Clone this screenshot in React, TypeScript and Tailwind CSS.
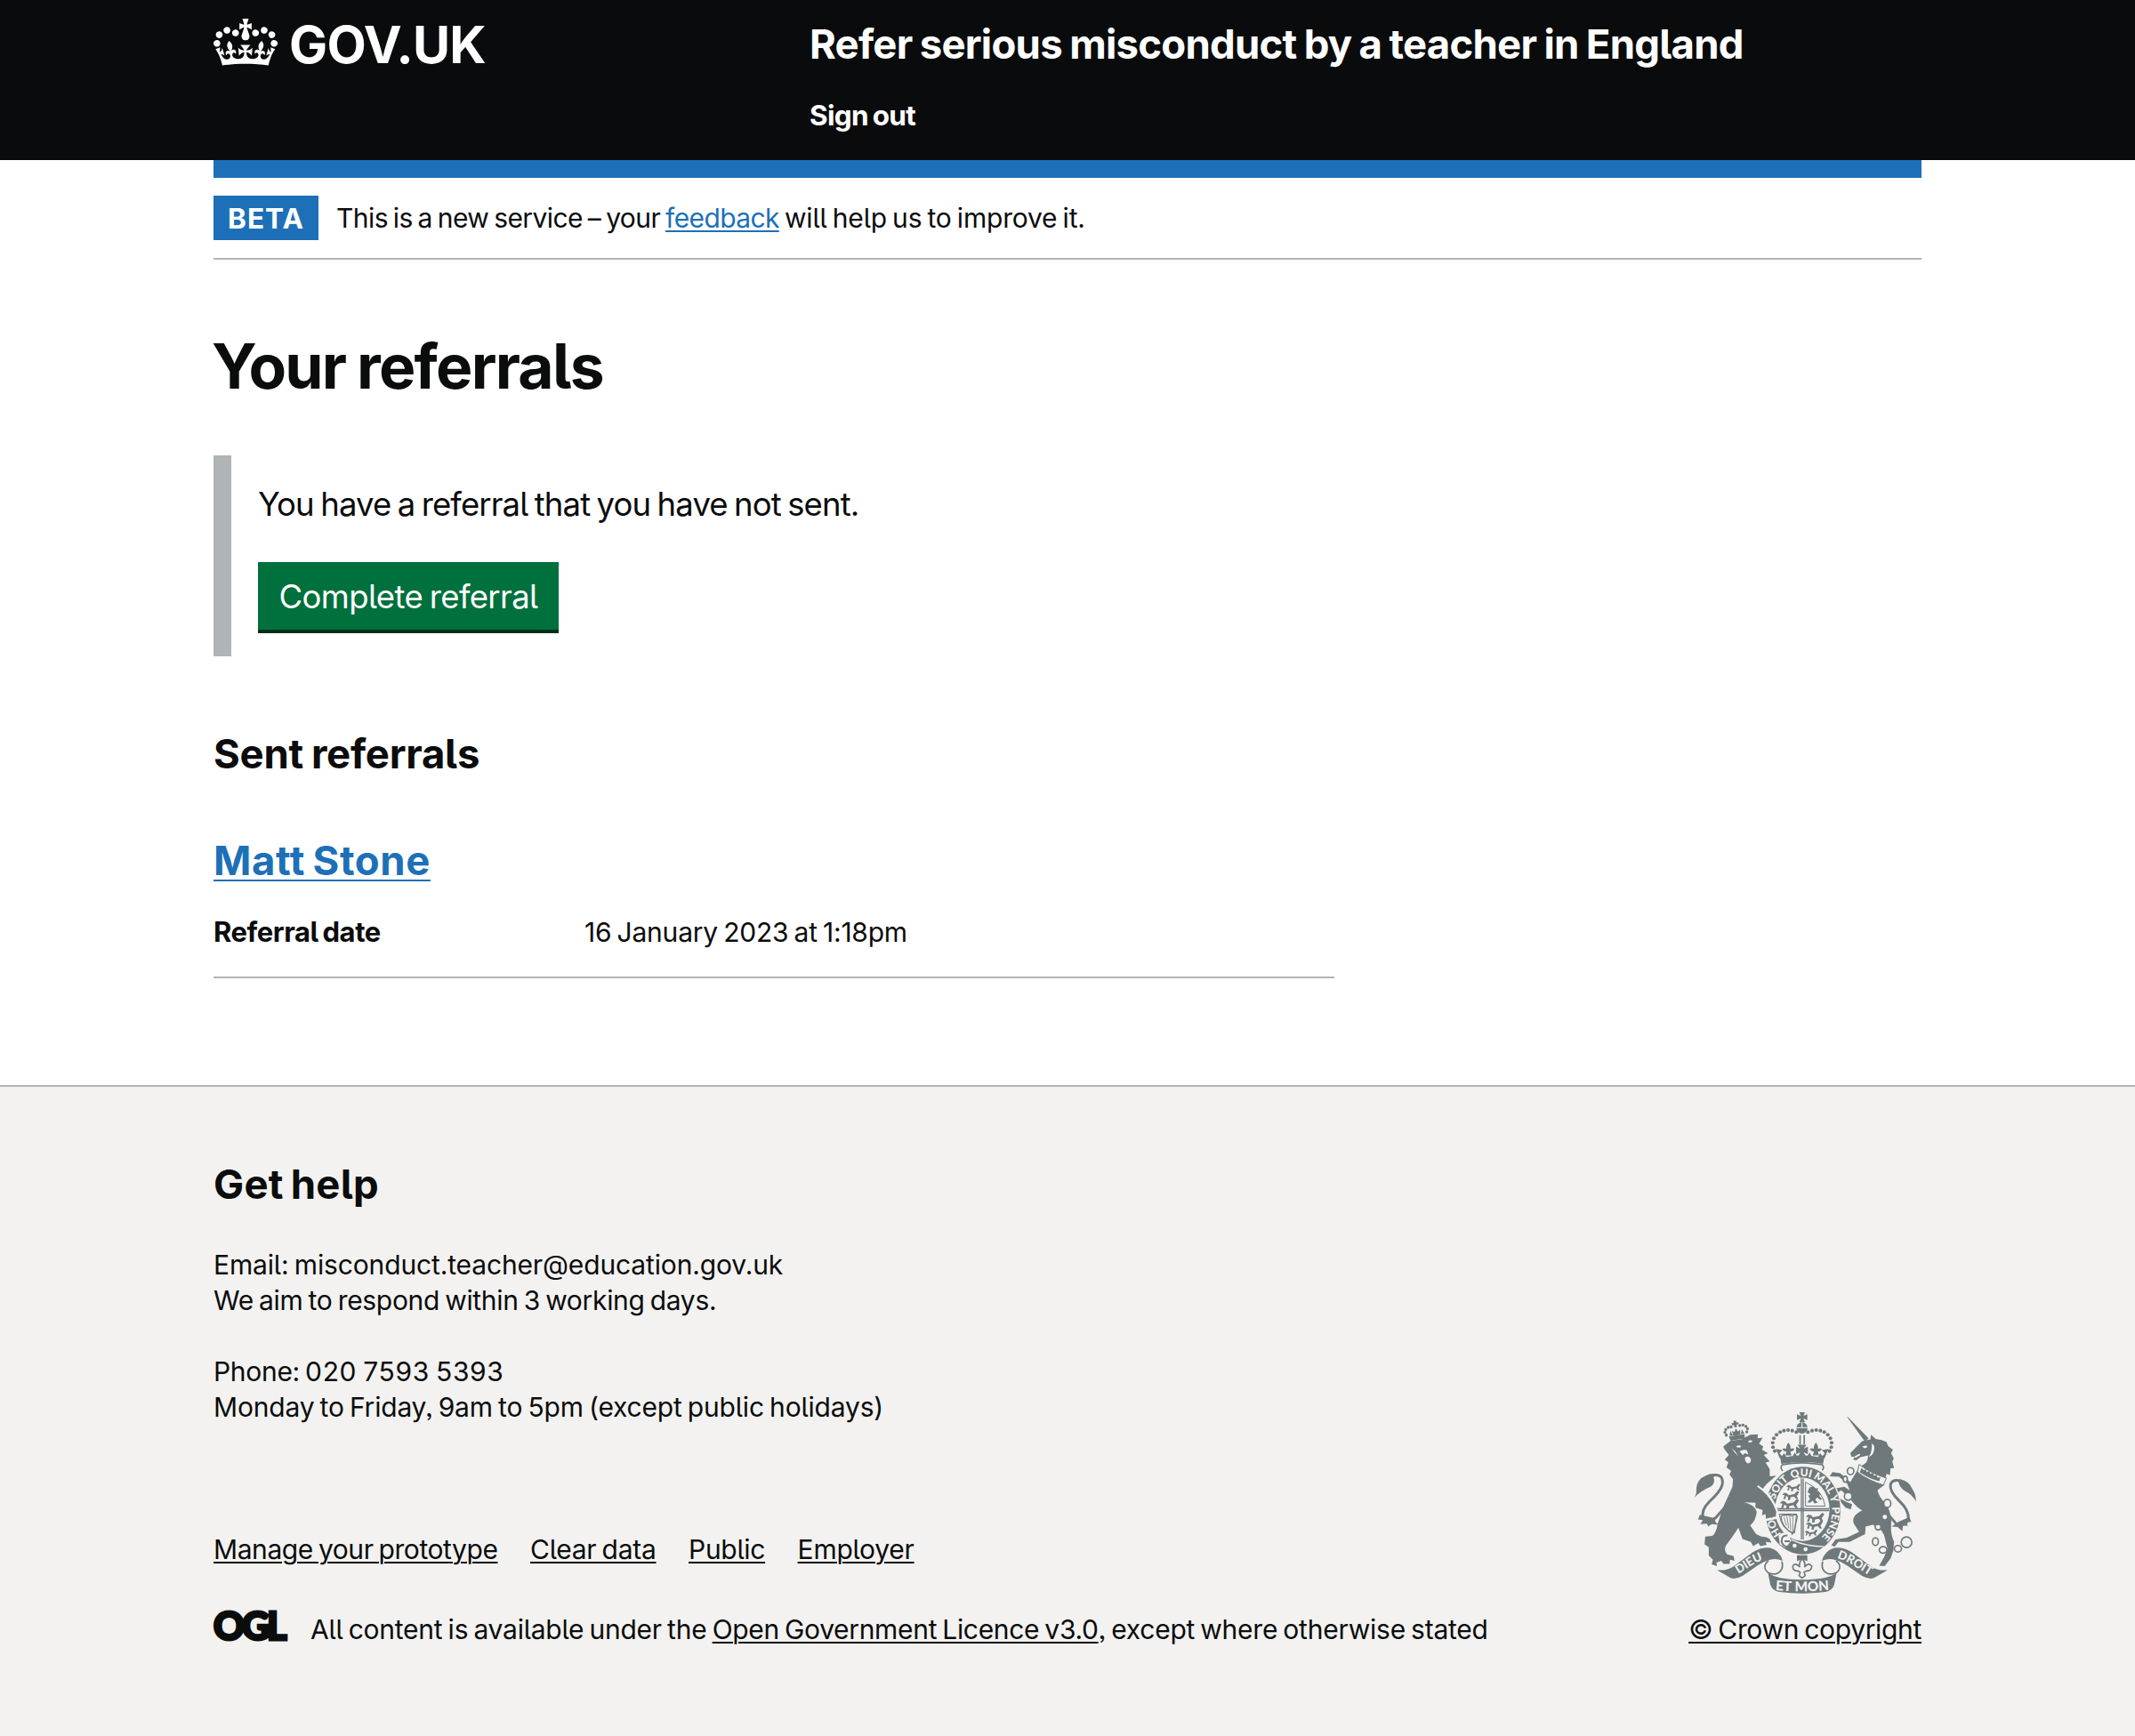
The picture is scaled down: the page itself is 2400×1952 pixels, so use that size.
const CROWN =
  "M25 30.2c3.5 1.5 7.7-.2 9.1-3.7 1.5-3.6-.2-7.8-3.9-9.2-3.6-1.4-7.6.3-9.1 3.9-1.4 3.5.3 7.5 3.9 9zM9 39.5c3.6 1.5 7.8-.2 9.2-3.7 1.5-3.6-.2-7.8-3.9-9.1-3.6-1.5-7.6.2-9.1 3.8-1.4 3.5.3 7.5 3.8 9zM4.4 57.2c3.5 1.5 7.7-.2 9.1-3.8 1.5-3.6-.2-7.7-3.9-9.1-3.5-1.5-7.6.3-9.1 3.8-1.4 3.5.3 7.6 3.9 9.1zm38.3-21.4c3.5 1.5 7.7-.2 9.1-3.8 1.5-3.6-.2-7.7-3.9-9.1-3.6-1.5-7.6.3-9.1 3.8-1.3 3.6.4 7.7 3.9 9.1zm64.4-5.6c-3.6 1.5-7.8-.2-9.1-3.7-1.5-3.6.2-7.8 3.8-9.2 3.6-1.4 7.7.3 9.2 3.9 1.3 3.5-.4 7.5-3.9 9zm15.9 9.3c-3.6 1.5-7.7-.2-9.1-3.7-1.5-3.6.2-7.8 3.7-9.1 3.6-1.5 7.7.2 9.2 3.8 1.5 3.5-.3 7.5-3.8 9zm4.7 17.7c-3.6 1.5-7.8-.2-9.2-3.8-1.5-3.6.2-7.7 3.9-9.1 3.6-1.5 7.7.3 9.2 3.8 1.3 3.5-.4 7.6-3.9 9.1zM89.3 35.8c-3.6 1.5-7.8-.2-9.2-3.8-1.4-3.6.2-7.7 3.9-9.1 3.6-1.5 7.7.3 9.2 3.8 1.4 3.6-.3 7.7-3.9 9.1zM69.7 17.7l8.9 4.7V9.3l-8.9 2.8c-.2-.3-.5-.6-.9-.9L72.4 0H59.6l3.5 11.2c-.3.3-.6.5-.9.9l-8.8-2.8v13.1l8.8-4.7c.3.3.6.7.9.9l-5 15.4v.1c-.2.8-.4 1.6-.4 2.4 0 4.1 3.1 7.5 7 8.1h.2c.3 0 .7.1 1 .1.4 0 .7 0 1-.1h.2c4-.6 7.1-4.1 7.1-8.1 0-.8-.1-1.7-.4-2.4V34l-5.1-15.4c.4-.2.7-.6 1-.9zM66 92.8c16.9 0 32.8 1.1 47.1 3.2 4-16.9 8.9-26.7 14-33.5l-9.6-3.4c1 4.9 1.1 7.2 0 10.2-1.5-1.4-3-4.3-4.2-8.7L108.6 76c2.8-2 5-3.2 7.5-3.3-4.4 9.4-10 11.9-13.6 11.2-4.3-.8-6.3-4.6-5.6-7.9 1-4.7 5.7-5.9 8-.5 4.3-8.7-3-11.4-7.6-8.8 7.1-7.2 7.9-13.5 2.1-21.1-8 6.1-8.1 12.3-4.5 20.8-4.7-5.4-12.1-2.5-9.5 6.2 3.4-5.2 7.9-2 7.2 3.1-.6 4.3-6.4 7.8-13.5 7.2-10.3-.9-10.9-8-11.2-13.8 2.5-.5 7.1 1.8 11 7.3L80.2 60c-4.1 4.4-8 5.3-12.3 5.4 1.4-4.4 8-11.6 8-11.6H55.5s6.4 7.2 7.9 11.6c-4.2-.1-8-1-12.3-5.4l1.4 16.4c3.9-5.5 8.5-7.7 10.9-7.3-.3 5.8-.9 12.8-11.1 13.8-7.2.6-12.9-2.9-13.5-7.2-.7-5 3.8-8.3 7.1-3.1 2.7-8.7-4.6-11.6-9.4-6.2 3.7-8.5 3.6-14.7-4.6-20.8-5.8 7.6-5 13.9 2.2 21.1-4.7-2.6-11.9.1-7.7 8.8 2.3-5.5 7.1-4.2 8.1.5.7 3.3-1.3 7.1-5.7 7.9-3.5.7-9-1.8-13.5-11.2 2.5.1 4.7 1.3 7.5 3.3l-4.7-15.4c-1.2 4.4-2.7 7.2-4.3 8.7-1.1-3-.9-5.3 0-10.2l-9.5 3.4c5 6.9 9.9 16.7 14 33.5 14.8-2.1 30.8-3.2 47.7-3.2z";

const INK = "#6f797b";
const PAPER = "#f3f2f1";

const crownPearls: [number, number][] = [
  [418, 121], [404, 116], [390, 114], [376, 116], [363, 121], [351, 130], [342, 142], [338, 157], [339, 172], [345, 185],
];

const lionCrownPearls: [number, number][] = [
  [180, 126], [177, 116], [181, 107], [190, 101], [200, 101], [230, 101], [241, 101], [250, 107], [254, 116], [250, 126],
];

function ShieldLion({ x, y, s }: { x: number; y: number; s: number }) {
  return (
    <path
      transform={`translate(${x} ${y}) scale(${s})`}
      d="M0 4l6-6 8 2 4 5 16-3 8-8 6 2-3 6-4 5 4 9h-6l-5-7-10 2-2 8h-6l1-8-6-4-2 9H3l4-11z"
    />
  );
}

function SideRibbon() {
  return (
    <g>
      <path fill={INK} d="M150 587Q184 590 205 575L270 527Q300 508 330 512Q362 520 372 556Q345 544 322 554Q298 562 272 582L236 607Q212 620 196 614Z" />
      <path fill="none" stroke={INK} strokeWidth="5" d="M324 555Q302 572 318 592Q326 602 350 600Q378 588 369 558" />
    </g>
  );
}

function Crest({ className }: { className: string }) {
  return (
    <svg className={className} viewBox="72 54 750 613" fill={INK} aria-hidden="true">
      {/* imperial crown */}
      <path d="M428 54h19l-5 12 13-5v19l-13-5 5 13h-19l5-13-13 5V61l13 5z" />
      <ellipse cx="437" cy="107" rx="19" ry="19" />
      <path stroke={PAPER} strokeWidth="3" fill="none" d="M417 106h40M437 88v18" />
      {[0, 1].map((side) => (
        <g key={side} transform={side ? "matrix(-1 0 0 1 875 0)" : undefined}>
          {crownPearls.map(([x, y]) => <circle key={x * 1000 + y} cx={x} cy={y} r="6.2" />)}
          <path d="M391 156q9 12 7 22 8-5 13 1-3 9-13 7l3 14h-20l3-14q-10 2-13-7 5-6 13-1-2-10 7-22z" />
          <path d="M349 178l22 4-10 11 8 9-7 8zM376 192l8 12h-16zM412 190l8 12h-14z" />
          <rect x="428" y="131" width="5" height="32" />
        </g>
      ))}
      <path d="M422 164h30l-9 13 14-7v26l-14-7 6 12h-24l6-12-14 7v-26l14 7z" />
      <path d="M358 196Q366 210 367 228Q437 216 508 228Q510 210 517 196Q500 209 478 203Q437 196 397 203Q376 209 358 196z" />
      <path fill="none" stroke={INK} strokeWidth="5" d="M371 231Q437 219 505 231Q514 240 505 250M371 231Q361 242 372 252" />

      {/* lion supporter */}
      <path fill="none" stroke={INK} strokeWidth="9" d="M140 266Q172 262 168 298Q162 322 124 356Q94 386 104 412Q120 430 146 410L186 364" />
      <path d="M72 343Q82 332 80 312Q82 280 112 268Q130 258 152 263L138 273Q146 292 128 306Q98 318 72 343z" />
      <path d="M92 400l-6 16 16 2-8 14 22-2 4 10 12-8 24 2q-16-8-12-22z" />
      <path d="M171 170L196 150L232 146L262 130L288 128L287 142L304 140L292 160L306 170L302 180L322 192L308 198L328 220L314 224L328 246L328 270L350 268L318 296L300 318L332 345L340 366L304 384L280 376L282 360L240 358Q276 364 284 390Q282 420 262 436L282 466L300 474Q330 474 334 494L314 492L318 502L296 506L290 496L272 506L264 492L236 482L222 444Q206 470 180 504Q172 520 184 534L206 540L209 556L194 552L192 566L172 566L164 556L148 562L150 574L132 568L136 552L122 538L122 510L108 500L110 474L134 472Q148 460 152 430L172 372L202 306L204 280L192 264L198 252L182 240L188 222L176 214L190 198L176 180z" />
      <path fill={PAPER} d="M214 170q10-7 18-1-6 9-18 1zM254 153q8-7 16-2-5 9-16 2zM226 186q12-8 24-4l6 14-14-4-4 7zM244 208q12-10 20 3 3 14-10 16-9-4-10-19zM200 176q14 10 22 26-16-14-22-26z" />
      <g transform="rotate(-9 215 120)">
        <path d="M188 132h54l-3 15h-48zM211 82h9v7h7v7h-7v8h-9v-8h-7v-7h7z" />
        {lionCrownPearls.map(([x, y]) => <circle key={x} cx={x} cy={y} r="5" />)}
        <path d="M215 108l6 12 8-6-2 18h-24l-2-18 8 6zM196 114l6 16h-12zM235 114l6 16h-12z" />
      </g>

      {/* unicorn supporter */}
      <path fill="none" stroke={INK} strokeWidth="9" d="M772 286Q742 278 736 298Q732 320 764 352Q800 386 796 414Q788 438 760 436L732 404" />
      <path d="M822 356Q822 330 810 314Q800 286 768 280L762 286Q766 310 788 322Q808 330 822 356z" />
      <path d="M800 408l6 16-14 2 2 12-16-2-2 20-16-14-20-2 22-16z" />
      <path d="M588 68L594 72L662 142L650 154z" />
      <path d="M600 192L616 176L640 152L668 146L670 130L686 144L706 148L722 154L728 168L744 180L738 192L747 210L742 220L748 242L736 244L734 266L722 262L718 288L680 268L636 236Q662 226 660 200L634 206L620 216L610 214L614 204L604 204z" />
      <path fill={PAPER} d="M640 170l14-4 4 6-10 4zM612 204l20-10 2 4-16 10zM672 160q14 6 8 24-2 14-18 22 10-16 10-28 2-10 0-18z" />
      <path d="M628 244L716 298L692 318Q696 340 722 366Q742 400 738 440Q736 466 748 492L746 520L736 548L716 574L698 572L714 544L726 516L714 468L700 446L676 434L652 440L650 466L598 492L560 492L548 508L536 504L550 484L588 478L630 458L612 430Q602 404 640 386Q610 366 596 340Q580 330 570 318L556 326L562 344L590 358L606 364L602 382L584 376L570 360L546 340L548 312L580 306L598 318L590 296L562 272L530 270L540 256L566 260L600 290z" />
      <path fill={PAPER} stroke={INK} strokeWidth="3" d="M630 230Q670 262 722 276L712 300Q660 284 624 256z" />
      <path d="M638 242l8 8 6-4 4 10 8-4 4 10 9-3 3 9 9-2 3 9 10-2-4 14q-34-8-66-30z" />
      <g fill={PAPER} stroke={INK} strokeWidth="5">
        <ellipse cx="601" cy="253" rx="11" ry="12" />
        <ellipse cx="583" cy="280" rx="7" ry="10" />
        <ellipse cx="593" cy="338" rx="13" ry="13" />
        <ellipse cx="725" cy="362" rx="12" ry="14" />
        <circle cx="717" cy="408" r="10" />
        <circle cx="694" cy="442" r="10" />
        <ellipse cx="685" cy="491" rx="10" ry="13" />
        <ellipse cx="711" cy="519" rx="13" ry="11" />
        <ellipse cx="761" cy="515" rx="12" ry="11" />
        <circle cx="790" cy="493" r="18" />
      </g>

      {/* garter and shield */}
      <ellipse cx="440" cy="386" rx="131" ry="152" fill={PAPER} />
      <ellipse cx="440" cy="386" rx="127" ry="148" />
      <ellipse cx="438" cy="382" rx="92" ry="107" fill={PAPER} />
      <path stroke={INK} strokeWidth="4" fill="none" d="M435 278V484M441 278V484M347 380H529M347 386H529" />
      <ShieldLion x={384} y={302} s={1} />
      <ShieldLion x={370} y={328} s={1.2} />
      <ShieldLion x={362} y={356} s={1.35} />
      <ShieldLion x={450} y={402} s={1.3} />
      <ShieldLion x={450} y={428} s={1.2} />
      <ShieldLion x={446} y={456} s={0.9} />
      <path fill="none" stroke={INK} strokeWidth="3" d="M449 290V371H515Q508 318 449 290M360 398H418L412 462Q366 452 360 398" />
      <path d="M462 308l12-4 8 8 10-2-4 10 10 8-2 10 10 10-8 2-10-8-6 8 8 10-10 2-8-10-8 8-8-2 8-12-6-10 8-4-10-8z" />
      <path fill="none" stroke={INK} strokeWidth="4" d="M366 404Q390 398 404 404Q424 392 420 412L410 458L402 468M366 404Q366 440 406 464" />
      <path fill="none" stroke={INK} strokeWidth="2.5" d="M376 408L384 436M386 406L392 446M396 406L399 452M406 406L406 458" />
      {/* lion's paw over the garter */}
      <path fill="none" stroke={PAPER} strokeWidth="9" d="M286 304Q326 330 344 368L353 392L350 410L314 418" />
      <path d="M256 330L284 304Q322 330 340 366L350 390L348 408L338 400L336 412L326 404L316 414L314 398L302 402L304 384L280 374L280 360z" />
      {/* buckle and strap end */}
      <path fill={PAPER} d="M358 470Q378 452 392 468L400 488L382 512L362 500z" />
      <path fill="none" stroke={INK} strokeWidth="6" d="M388 470Q368 468 368 490Q372 510 394 508M378 490h18" />
      <path fill="none" stroke={PAPER} strokeWidth="4" d="M400 484Q450 508 512 508" />
      <circle cx="412" cy="505" r="7" fill={PAPER} />
      <circle cx="449" cy="517" r="7" fill={PAPER} />
      <path id="garter" fill="none" d="M440 502A99 116 0 0 1 440 270A99 116 0 0 1 440 502" />
      <g className="font-['Lato'] text-[36px] font-black" fill={PAPER} textAnchor="middle">
        <text><textPath href="#garter" startOffset="16.5%">HO</textPath></text>
        <text><textPath href="#garter" startOffset="36.5%">SOIT</textPath></text>
        <text><textPath href="#garter" startOffset="49.2%">QUI</textPath></text>
        <text><textPath href="#garter" startOffset="61%">MAL</textPath></text>
        <text><textPath href="#garter" startOffset="69.5%">Y</textPath></text>
        <text><textPath href="#garter" startOffset="81.5%">PENSE</textPath></text>
      </g>

      {/* motto ribbon */}
      <SideRibbon />
      <g transform="matrix(-1 0 0 1 876 0)"><SideRibbon /></g>
      <path d="M322 596Q350 620 438 620Q526 620 554 596L546 636Q540 656 516 661Q438 671 360 661Q336 656 330 636z" />
      <path d="M420 537h35v20q-18-10-35 0z" />
      <path fill={PAPER} stroke={INK} strokeWidth="5" strokeLinejoin="round" d="M437 548Q450 562 446 576Q462 560 470 574Q470 590 452 590L444 594L448 606L437 614L427 606L431 594L422 590Q405 590 406 574Q412 560 429 576Q425 562 437 548z" />
      <g className="font-['Lato'] font-black" fill={PAPER} textAnchor="middle">
        <path id="dieu" fill="none" d="M200 614L258 577Q290 554 336 545" />
        <path id="droit" fill="none" d="M538 542Q580 552 614 574L682 616" />
        <path id="etmon" fill="none" d="M330 653Q438 665 546 653" />
        <text className="text-[40px]"><textPath href="#dieu" startOffset="48%">DIEU</textPath></text>
        <text className="text-[40px]"><textPath href="#droit" startOffset="49%">DROIT</textPath></text>
        <text className="text-[46px] [word-spacing:2px]"><textPath href="#etmon" startOffset="50%">ET MON</textPath></text>
      </g>
    </svg>
  );
}

const link = "underline decoration-[2px] underline-offset-[3px]";

export default function App() {
  return (
    <div className="min-h-[1952px] bg-white font-['Inter',sans-serif] text-[30px] leading-[40px] whitespace-pre text-[#0b0c0c] [font-feature-settings:'cv05','ss03'] [word-spacing:-2px]">
      <header className="h-[180px] bg-[#0a0b0c] text-white">
        <div className="mx-auto flex w-[1920px]">
          <a className="flex w-[670px] items-start pt-[21px]">
            <svg className="h-[53px] w-[72px]" viewBox="0 0 132 97" fill="currentColor" aria-hidden="true"><path d={CROWN} /></svg>
            <span className="ml-[13px] text-[57.5px] leading-[58px] font-[650] tracking-[-0.7px]">GOV.UK</span>
          </a>
          <div className="flex flex-col items-start pt-[20px] font-[650]">
            <a className="text-[45.5px] leading-[60px] tracking-[-0.75px] [word-spacing:-1.8px]">Refer serious misconduct by a teacher in England</a>
            <a className="mt-[30px] text-[31.5px] leading-[40px] tracking-[-0.7px]">Sign out</a>
          </div>
        </div>
      </header>
      <div className="mx-auto w-[1920px]">
        <div className="h-[20px] bg-[#1d70b8]" />
        <div className="flex items-center border-b-2 border-[#b1b4b6] py-[20px] leading-[50px]">
          <strong className="mr-[20px] h-[50px] w-[118px] bg-[#1d70b8] pt-px text-center text-[31.5px] font-[650] tracking-[1.07px] text-white">BETA</strong>
          <p className="tracking-[-0.57px]">
            This is a new service – your <a className={"tracking-[-0.62px] text-[#1d70b8] " + link}>feedback</a>
            <span className="tracking-[-0.2px]"> will help us to improve it.</span>
          </p>
        </div>
        <main>
          <h1 className="mt-[80px] -ml-[2px] text-[69.5px] leading-[80px] font-[650] tracking-[-1.75px] [word-spacing:-2px]">Your referrals</h1>
          <div className="mt-[60px] flex w-[1260px] flex-col items-start border-l-[20px] border-[#b1b4b6] py-[30px] pl-[30px] text-[36.5px]">
            <p className="leading-[50px] tracking-[-0.88px]">You have a referral that you have not sent.</p>
            <a className="mt-[40px] flex h-[76px] w-[338px] items-center justify-center bg-[#00703c] pt-[2px] leading-[38px] tracking-[-0.62px] text-white shadow-[0_4px_0_#002d18]">Complete referral</a>
          </div>
          <h2 className="mt-[80px] text-[45.5px] leading-[60px] font-[650] tracking-[-0.25px] [word-spacing:-1.5px]">Sent referrals</h2>
          <h2 className="mt-[60px] text-[45.5px] leading-[60px] font-[650] tracking-[0.63px] text-[#1d70b8] [word-spacing:-3px]">
            <a className="underline decoration-[2px] underline-offset-[5px]">Matt Stone</a>
          </h2>
          <dl className="mt-[30px] flex w-[1260px] border-b-2 border-[#b1b4b6] pb-[30px]">
            <dt className="w-[417px] text-[31px] font-[650] tracking-[-0.45px]">Referral date</dt>
            <dd className="tracking-[-0.22px]">16 January 2023 at 1:18pm</dd>
          </dl>
        </main>
      </div>
      <footer className="mt-[120px] h-[732px] border-t-2 border-[#b1b4b6] bg-[#f3f2f1] pt-[80px]">
        <div className="mx-auto w-[1920px]">
          <h2 className="text-[45.5px] leading-[60px] font-[650] tracking-[0.27px] [word-spacing:-3px]">Get help</h2>
          <div className="mt-[40px]">
            <p className="tracking-[-0.14px]">Email: misconduct.teacher@education.gov.uk</p>
            <p className="tracking-[-0.31px]">We aim to respond within 3 working days.</p>
            <p className="mt-[40px] tracking-[-0.3px]">Phone: <span className="tracking-[0.65px]">020 7593 5393</span></p>
            <p className="tracking-[-0.19px]">Monday to Friday, 9am to 5pm (except public holidays)</p>
          </div>
          <div className="flex items-end justify-between">
            <div>
              <div className="flex gap-[36.5px]">
                <a className={"tracking-[-0.42px] " + link}>Manage your prototype</a>
                <a className={"tracking-[-0.26px] " + link}>Clear data</a>
                <a className={"tracking-[-0.32px] " + link}>Public</a>
                <a className={"tracking-[-0.25px] " + link}>Employer</a>
              </div>
              <div className="mt-[50px] flex items-start">
                <span className="w-[109px] font-['Lato'] text-[43px] leading-[32px] font-black tracking-[-3px] [-webkit-text-stroke:3px_#0b0c0c]">OGL</span>
                <p className="tracking-[-0.24px]">
                  All content is available under the <a className={"tracking-[-0.32px] " + link}>Open Government Licence v3.0</a>, except where otherwise stated
                </p>
              </div>
            </div>
            <div className="-mt-[14px] flex flex-col items-end">
              <Crest className="mr-[6px] h-[204px] w-[250px]" />
              <a className={"mt-[20px] tracking-[-0.33px] " + link}>© Crown copyright</a>
            </div>
          </div>
        </div>
      </footer>
    </div>
  );
}
